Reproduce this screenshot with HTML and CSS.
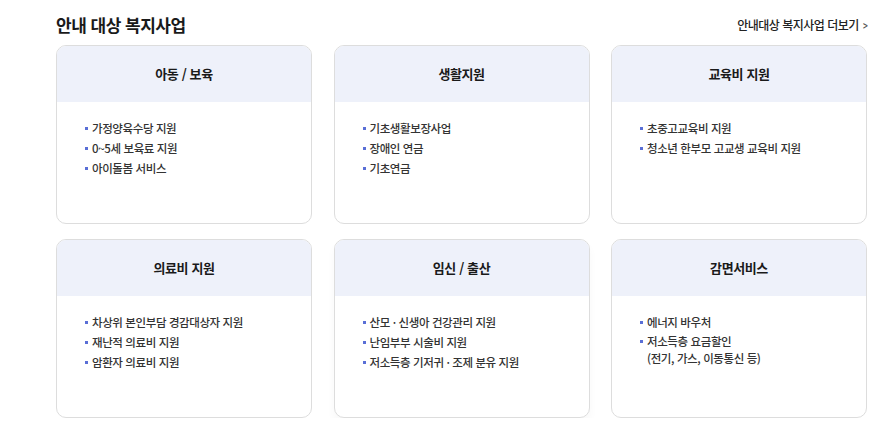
FILE: index.html
```html
<!DOCTYPE html>
<html lang="ko">
<head>
  <meta charset="UTF-8" />
  <title>안내 대상 복지사업</title>
  <link rel="stylesheet" href="styles.css">
</head>
<body>

  <div class="welfare">
    <div class="welfare-head">
      <h2>안내 대상 복지사업</h2>
      <a href="#" class="more">안내대상 복지사업 더보기 <span class="arrow">&gt;</span></a>
    </div>

    <div class="card-grid">
      <div class="card">
        <h3>아동 / 보육</h3>
        <ul>
          <li>가정양육수당 지원</li>
          <li>0~5세 보육료 지원</li>
          <li>아이돌봄 서비스</li>
        </ul>
      </div>
      <div class="card">
        <h3>생활지원</h3>
        <ul>
          <li>기초생활보장사업</li>
          <li>장애인 연금</li>
          <li>기초연금</li>
        </ul>
      </div>
      <div class="card">
        <h3>교육비 지원</h3>
        <ul>
          <li>초중고교육비 지원</li>
          <li>청소년 한부모 고교생 교육비 지원</li>
        </ul>
      </div>
      <div class="card">
        <h3>의료비 지원</h3>
        <ul>
          <li>차상위 본인부담 경감대상자 지원</li>
          <li>재난적 의료비 지원</li>
          <li>암환자 의료비 지원</li>
        </ul>
      </div>
      <div class="card hover">
        <h3>임신 / 출산</h3>
        <ul>
          <li>산모 · 신생아 건강관리 지원</li>
          <li>난임부부 시술비 지원</li>
          <li>저소득층 기저귀 · 조제 분유 지원</li>
        </ul>
      </div>
      <div class="card">
        <h3>감면서비스</h3>
        <ul>
          <li>에너지 바우처</li>
          <li class="two-line">저소득층 요금할인<br>(전기, 가스, 이동통신 등)</li>
        </ul>
      </div>
    </div>
  </div>

</body>
</html>
```

FILE: styles.css
```css
* {
  box-sizing: border-box;
}
body {
  margin: 0;
  padding: 0;
  background: #ffffff;
  font-family: 'Noto Sans CJK KR', 'Noto Sans', sans-serif;
  color: #222;
}
.welfare {
  padding: 0 22px 0 56px;
}
.welfare-head {
  display: flex;
  justify-content: space-between;
  align-items: center;
  height: 45px;
  padding-top: 3px;
}
.welfare-head h2 {
  margin: 0;
  font-size: 17px;
  font-weight: 700;
  color: #1a1a1a;
  letter-spacing: -0.5px;
}
.more {
  font-size: 12px;
  font-weight: 500;
  color: #222;
  text-decoration: none;
  letter-spacing: -0.5px;
  margin-right: -1px;
}
.more .arrow {
  display: inline-block;
  color: #555;
  transform: scaleX(0.7);
}
.card-grid {
  display: grid;
  grid-template-columns: repeat(3, 1fr);
  column-gap: 21.5px;
  row-gap: 15px;
}
.card {
  height: 179px;
  border: 1px solid #dddddd;
  border-radius: 10px;
  overflow: hidden;
  background: #fff;
}
.card.hover {
  box-shadow: 0 6px 10px rgba(0,0,0,0.03);
}
.card h3 {
  margin: 0;
  height: 56px;
  line-height: 56px;
  background: #eef1fa;
  text-align: center;
  font-size: 13px;
  font-weight: 700;
  color: #1a1a1a;
  letter-spacing: -0.4px;
}
.card ul {
  list-style: none;
  margin: 0;
  padding: 19px 0 0 28px;
}
.card li {
  position: relative;
  padding-left: 7px;
  font-size: 11.5px;
  font-weight: 500;
  line-height: 14px;
  margin-bottom: 6px;
  color: #333;
  letter-spacing: -0.4px;
}
.card li.two-line {
  line-height: 17px;
  margin-top: -2px;
}
.card li::before {
  content: "";
  position: absolute;
  left: 0;
  top: 6px;
  width: 3px;
  height: 3px;
  background: #5a6fd6;
}
.card li.two-line::before {
  top: 7px;
}
```
